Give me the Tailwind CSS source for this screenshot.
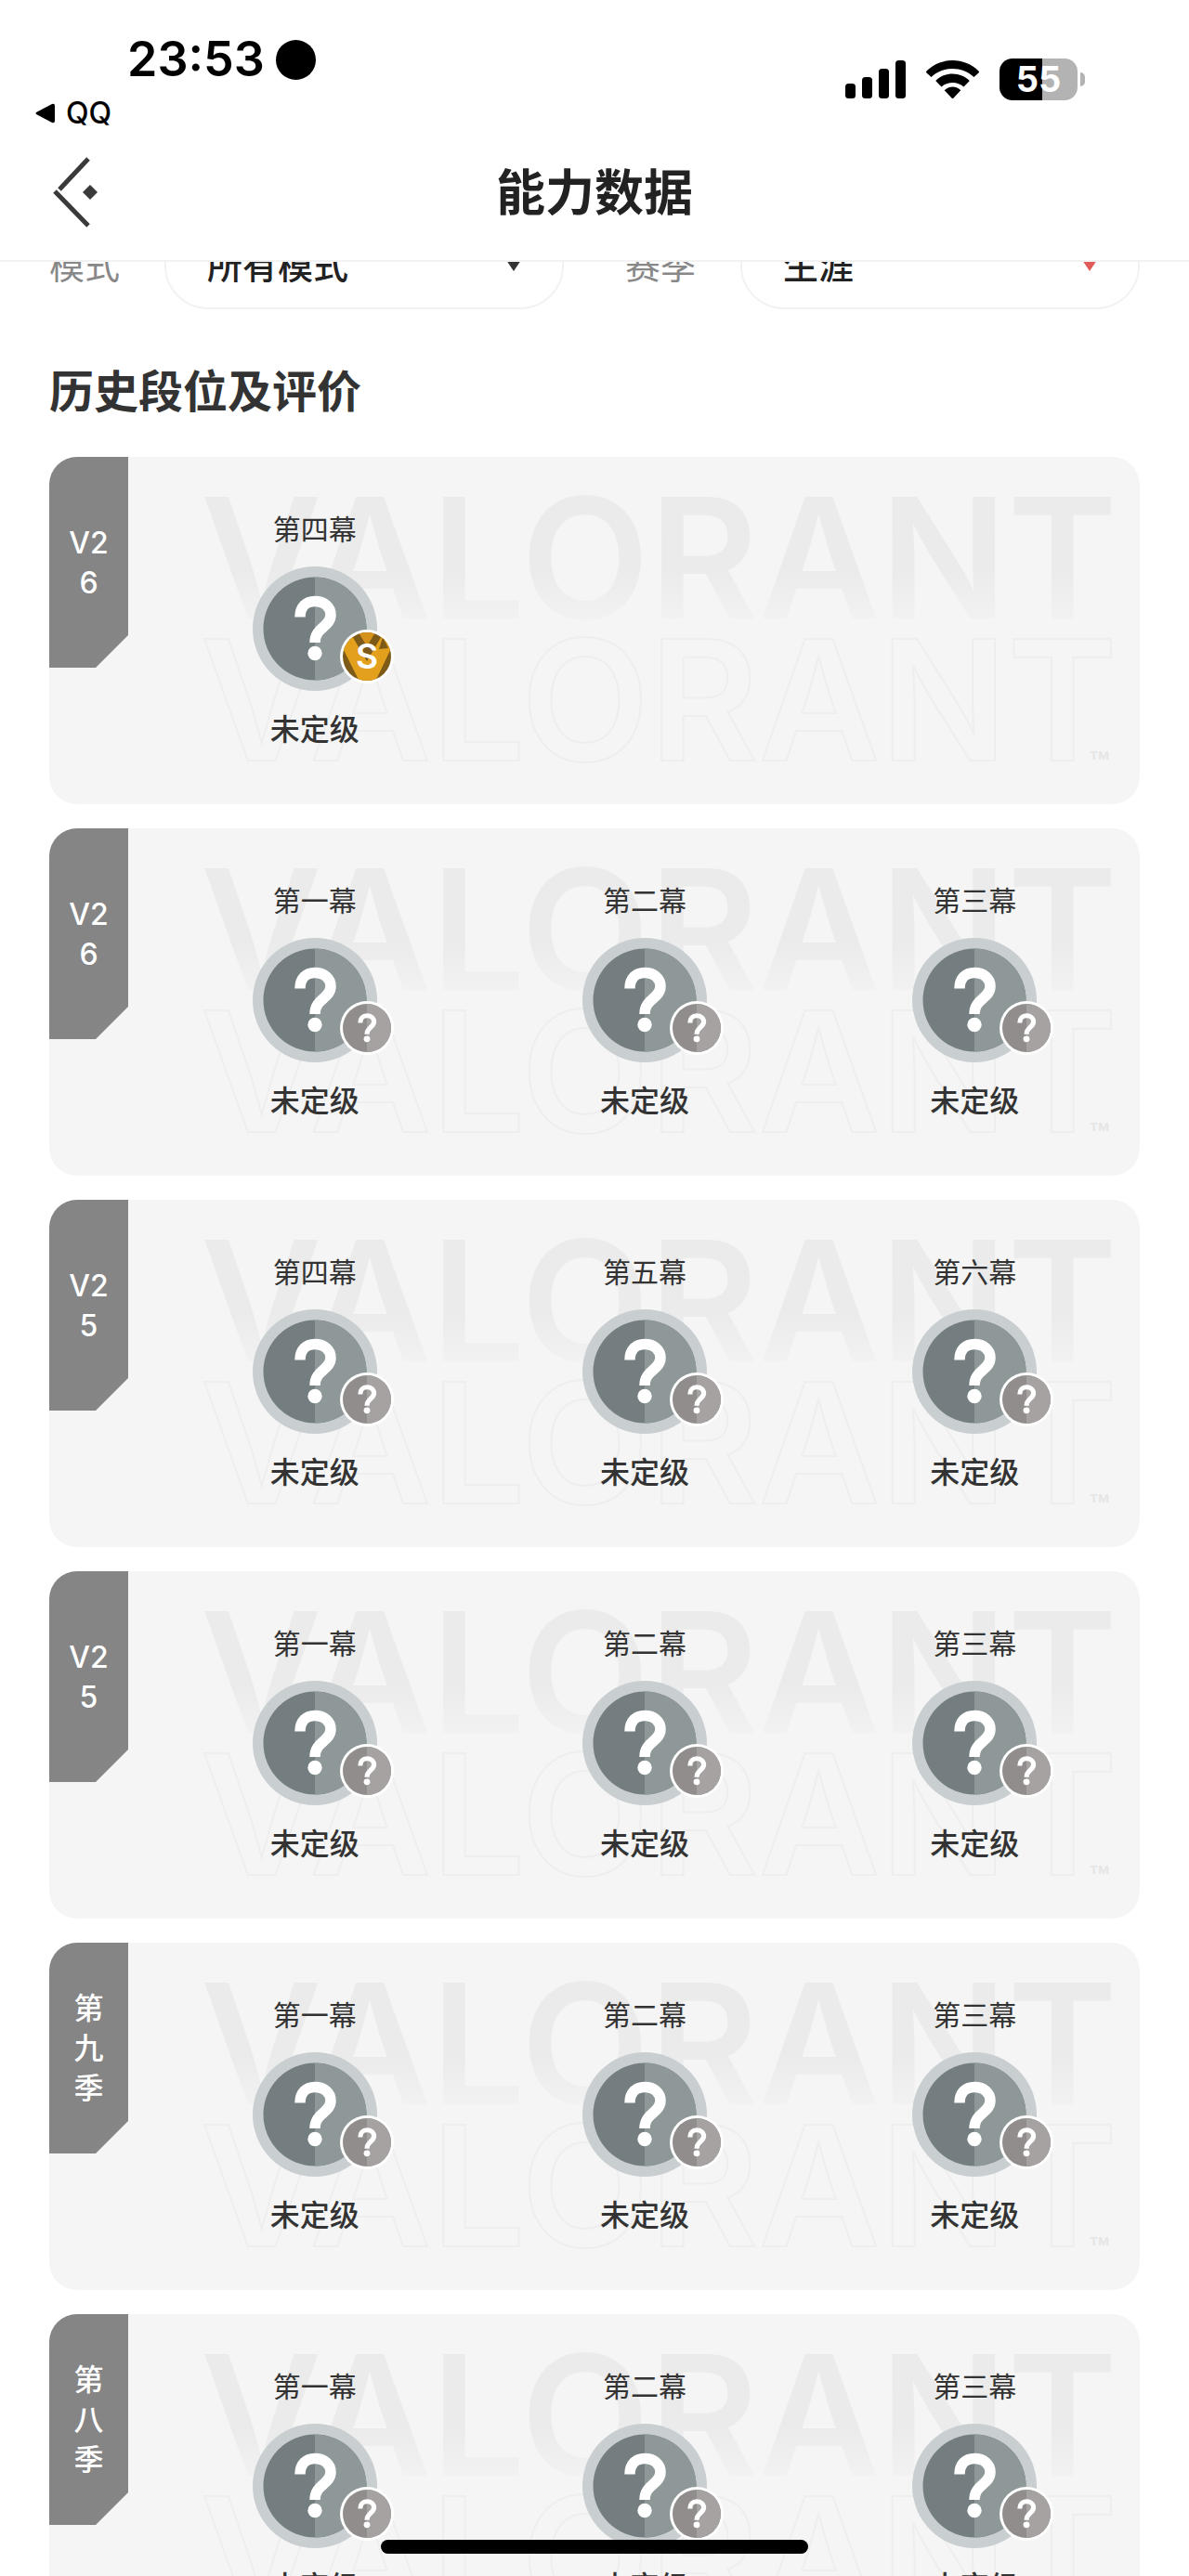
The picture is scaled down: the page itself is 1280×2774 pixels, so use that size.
<!DOCTYPE html>
<html lang="zh-CN">
<head>
  <meta charset="utf-8" />
  <meta content="width=device-width, initial-scale=1.0" name="viewport" />
  <title>能力数据</title>
  <script src="https://cdn.jsdelivr.net/npm/@tailwindcss/browser@4"></script>
</head>
<body class="bg-white text-[#333] font-['Inter','Noto_Sans_CJK_SC',sans-serif]">
  <!-- Shared icons -->
  <svg class="absolute size-0" aria-hidden="true">
    <clipPath id="disc"><circle cx="29" cy="29" r="26" /></clipPath>
    <symbol id="mark" viewBox="0 0 134 134">
      <path d="M51 54.5C51 43.5 57.5 37.5 67 37.5C77 37.5 84 43.5 84 52C84 65.5 67 65 67 82" fill="none" stroke="#fff" stroke-width="11.5" />
      <circle cx="67" cy="93.5" r="7.7" fill="#fff" />
    </symbol>
    <symbol id="rank" viewBox="0 0 134 134">
      <circle cx="67" cy="67" r="67" fill="#c9ced1" />
      <circle cx="67" cy="67" r="55.5" fill="#747d7f" />
      <path d="M67 11.5a55.5 55.5 0 0 1 0 111z" fill="#8f9899" />
      <use href="#mark" width="134" height="134" />
    </symbol>
    <symbol id="badge-none" viewBox="0 0 58 58">
      <circle cx="29" cy="29" r="29" fill="#fff" />
      <circle cx="29" cy="29" r="26" fill="#908d8c" />
      <path d="M29 3a26 26 0 0 1 0 52z" fill="#a5a2a1" />
      <use href="#mark" x="-1" y="-1" width="60" height="60" />
    </symbol>
    <symbol id="badge-s" viewBox="0 0 58 58">
      <circle cx="29" cy="29" r="29" fill="#fff" />
      <g clip-path="url(#disc)">
        <rect width="58" height="58" fill="#7d5a17" />
        <path d="M0 14L12 5L29 34L46 5L58 14L38 56H21z" fill="#e3a01c" />
        <path d="M18 0h22L29 18z" fill="#d4921c" />
        <path d="M46 8l6 12-10 1z" fill="#7d5a17" />
      </g>
      <text x="29" y="42" text-anchor="middle" font-family="Inter, sans-serif" font-size="37" font-weight="600" fill="#fff">S</text>
    </symbol>
  </svg>

  <div class="relative flex flex-col h-screen overflow-hidden">
    <!-- Status bar -->
    <div class="flex justify-between shrink-0 h-[140px] pr-28 text-black">
      <div class="pt-8">
        <div class="flex items-center gap-3 pl-[137px] h-16">
          <span class="text-[52px] leading-16 font-semibold">23:53</span>
          <span class="size-[43px] rounded-full bg-black"></span>
        </div>
        <a href="#" class="flex items-center gap-3 pl-[38px] h-13 text-[32px] font-medium">
          <svg class="w-[21px] h-[22px]" viewBox="0 0 21 22"><path d="M1 10Q0 11 1 12L18 21Q21 22 21 19V3Q21 0 18 1Z" /></svg>
          QQ
        </a>
      </div>
      <div class="flex items-center gap-[22px] mt-[63px] h-[45px]">
        <svg class="w-[65px] h-[41px]" viewBox="0 0 65 41">
          <rect x="0" y="25" width="11" height="16" rx="3.5" />
          <rect x="18" y="18" width="11" height="23" rx="3.5" />
          <rect x="36" y="9" width="11" height="32" rx="3.5" />
          <rect x="54" y="0" width="11" height="41" rx="3.5" />
        </svg>
        <svg class="w-[57px] h-[41px]" viewBox="0 0 57 41">
          <path d="M28.5 0C39 0 49 4 56.5 11.5Q57.5 12.5 56.5 13.5L51.500 18C45 12 37 9 28.5 9S12 12 5.5 18L.5 13.5Q-.5 12.5 .5 11.5C8 4 18 0 28.5 0Z" />
          <path d="M28.5 14.5C35.5 14.5 42 17.3 46.8 22L40.5 28.5C37 25.5 33 24 28.5 24S20 25.5 16.5 28.5L10.2 22C15 17.3 21.5 14.5 28.5 14.5Z" />
          <path d="M28.5 28.5C32 28.5 35 30 37.3 32.3L29.5 40.5Q28.5 41.5 27.5 40.5L19.7 32.3C22 30 25 28.5 28.5 28.5Z" />
        </svg>
        <div class="flex items-center gap-[3px]">
          <div class="w-[84px] h-[45px] rounded-[14px] bg-linear-to-r from-black from-55% to-[#b3b3b3] to-55% text-white text-[38px] leading-[45px] font-bold text-center">55</div>
          <span class="w-[5px] h-[15px] rounded-r-full bg-[#b3b3b3]"></span>
        </div>
      </div>
    </div>

    <!-- Header -->
    <div class="grid grid-cols-[1fr_auto_1fr] items-center shrink-0 h-[142px] px-[53px] pb-1 border-b-2 border-[#f2f2f2]">
      <button type="button" aria-label="返回" class="w-14">
        <svg class="w-14 h-20" viewBox="0 0 56 80" fill="none" stroke="#3a3a3a" stroke-width="5">
          <path d="M42 3L11 36M6 38L42 75" />
          <path d="M44 31l8 8-8 8-8-8z" fill="#3a3a3a" stroke="none" />
        </svg>
      </button>
      <h1 class="text-[53px] leading-16 font-semibold text-[#222]">能力数据</h1>
    </div>

    <main class="grow overflow-y-auto [scrollbar-width:none] px-[53px]">
      <!-- Filters -->
      <div class="grid grid-cols-2 gap-[66px] -mt-[43px] text-[38px]">
        <div class="flex items-center gap-12">
          <label for="mode" class="shrink-0 text-[#888]">模式</label>
          <div class="relative grow">
            <select id="mode" class="appearance-none w-full h-[94px] pl-11 border-2 border-[#f2f2f2] rounded-full font-medium text-[#222]">
              <option>所有模式</option>
            </select>
            <svg class="absolute right-[46px] top-[41px] w-4 h-3 pointer-events-none" viewBox="0 0 16 12"><path d="M0 0h16L8 12z" fill="#333" /></svg>
          </div>
        </div>
        <div class="flex items-center gap-12">
          <label for="season" class="shrink-0 text-[#888]">赛季</label>
          <div class="relative grow">
            <select id="season" class="appearance-none w-full h-[94px] pl-11 border-2 border-[#f2f2f2] rounded-full font-medium text-[#222]">
              <option>生涯</option>
            </select>
            <svg class="absolute right-[46px] top-[41px] w-4 h-3 pointer-events-none" viewBox="0 0 16 12"><path d="M0 0h16L8 12z" fill="#e25b5b" /></svg>
          </div>
        </div>
      </div>

      <h2 class="mt-[61px] mb-[42px] text-[48px] leading-14 font-semibold">历史段位及评价</h2>

      <!-- Season cards -->
      <div id="seasons" class="space-y-[26px]"></div>
    </main>

    <!-- Home indicator -->
    <div class="absolute bottom-6 inset-x-0 mx-auto w-[36%] h-[15px] rounded-full bg-black"></div>
  </div>

  <script>
    const seasons = [
      { name: 'V26', acts: ['第四幕'], badge: 'badge-s' },
      { name: 'V26', acts: ['第一幕', '第二幕', '第三幕'], badge: 'badge-none' },
      { name: 'V25', acts: ['第四幕', '第五幕', '第六幕'], badge: 'badge-none' },
      { name: 'V25', acts: ['第一幕', '第二幕', '第三幕'], badge: 'badge-none' },
      { name: '第九季', acts: ['第一幕', '第二幕', '第三幕'], badge: 'badge-none' },
      { name: '第八季', acts: ['第一幕', '第二幕', '第三幕'], badge: 'badge-none' }
    ];

    document.getElementById('seasons').innerHTML = seasons.map(season => `
      <section class="relative rounded-[30px] bg-[#f5f5f5] overflow-hidden">
        <!-- Watermark -->
        <div class="absolute inset-y-0 right-6 pt-8 text-[180px] leading-[153px] font-semibold select-none" aria-hidden="true">
          <p class="text-transparent bg-clip-text bg-linear-to-b from-[#ebebeb] from-60% to-[#f3f3f3]">VALORANT</p>
          <p class="text-[#f5f5f5] [-webkit-text-stroke:2px_#eeeeee]">VALORANT</p>
          <span class="absolute right-2 bottom-6 text-[36px] leading-10 text-[#e6e6e6]">™</span>
        </div>
        <!-- Season tab -->
        <div class="absolute left-0 top-0 flex items-center justify-center w-[85px] h-[227px] bg-[#858585] [clip-path:polygon(0_0,100%_0,100%_192px,50px_100%,0_100%)]">
          <h3 class="w-12 text-center break-all text-[32px] leading-[43px] font-medium text-white">${season.name}</h3>
        </div>
        <!-- Acts -->
        <div class="relative grid grid-cols-3 ml-[108px] pt-[58px] pb-[60px]">
          ${season.acts.map(act => `
            <div class="flex flex-col items-center">
              <p class="text-[30px] leading-10">${act}</p>
              <div class="relative mt-5 mb-[22px]">
                <svg class="size-[134px]"><use href="#rank" /></svg>
                <svg class="absolute -right-[18px] bottom-2 size-[58px]"><use href="#${season.badge}" /></svg>
              </div>
              <p class="text-[32px] leading-10 font-medium">未定级</p>
            </div>
          `).join('')}
        </div>
      </section>
    `).join('');
  </script>
</body>
</html>
